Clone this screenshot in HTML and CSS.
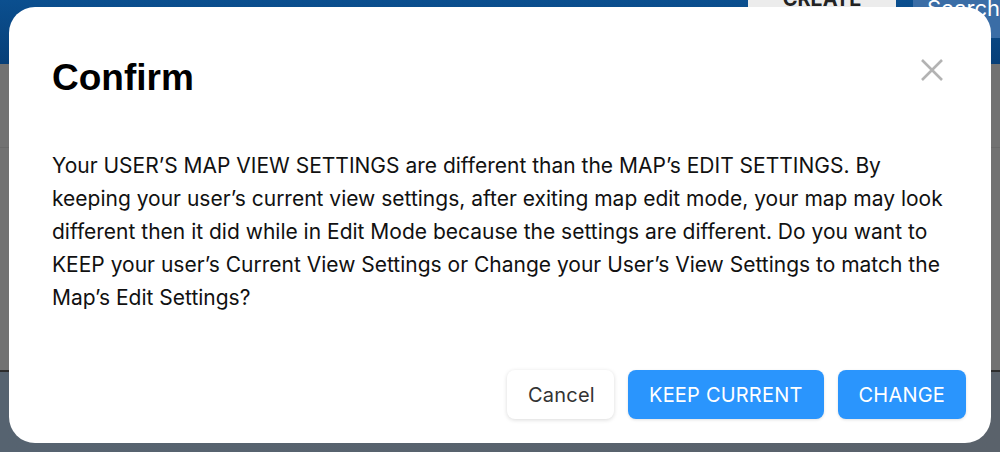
FILE: index.html
```html
<!DOCTYPE html>
<html>
<head>
<meta charset="utf-8">
<link rel="stylesheet" href="styles.css">
</head>
<body>
<div class="app">
  <header class="topbar">
    <div class="create">CREATE</div>
    <div class="search">Search</div>
  </header>
  <div class="content">
    <div class="band"></div>
  </div>
  <div class="footer"></div>
</div>
<div class="overlay">
  <div class="modal">
    <div class="modal-head">
      <h1 class="title">Confirm</h1>
      <button class="close" aria-label="Close">
        <svg width="24" height="24" viewBox="0 0 24 24"><path d="M2 2 L22 22 M22 2 L2 22" stroke="#b3b3b3" stroke-width="2.6" fill="none"/></svg>
      </button>
    </div>
    <p class="message">Your USER’S MAP VIEW SETTINGS are different than the MAP’s EDIT SETTINGS. By keeping your user’s current view settings, after exiting map edit mode, your map may look different then it did while in Edit Mode because the settings are different. Do you want to KEEP your user’s Current View Settings or Change your User’s View Settings to match the Map’s Edit Settings?</p>
    <div class="actions">
      <button class="btn btn-light">Cancel</button>
      <button class="btn btn-primary">KEEP CURRENT</button>
      <button class="btn btn-primary">CHANGE</button>
    </div>
  </div>
</div>
</body>
</html>
```
FILE: styles.css
```css
html, body {
  margin: 0;
  padding: 0;
  width: 1000px;
  height: 452px;
  overflow: hidden;
  font-family: Inter, "Liberation Sans", sans-serif;
}
.app {
  display: flex;
  flex-direction: column;
  height: 452px;
}
.topbar {
  height: 64px;
  background: linear-gradient(#0b4f8f, #073f78);
  display: flex;
  justify-content: flex-end;
  align-items: flex-start;
  gap: 17px;
}
.create {
  width: 148px;
  height: 30px;
  background: #ececec;
  color: #222;
  font-weight: 700;
  font-size: 20px;
  text-align: center;
  line-height: 22px;
  margin-top: -12px;
}
.search {
  width: 87px;
  height: 40px;
  background: #3a6da6;
  color: #fff;
  font-size: 22px;
  line-height: 20px;
  padding-left: 14px;
  margin-top: -2px;
  overflow: hidden;
  white-space: nowrap;
  box-sizing: border-box;
}
.content {
  height: 306px;
  background: #727272;
  border-bottom: 2px solid #2d2d2d;
}
.band {
  height: 83px;
  border-bottom: 1px solid #6a6a6a;
}
.footer {
  flex: 1;
  background: linear-gradient(90deg, #566370, #5a626b);
}
.overlay {
  position: absolute;
  inset: 0;
  padding: 7px 9px 9px 9px;
  box-sizing: border-box;
}
.modal {
  background: #fff;
  border-radius: 26px;
  height: 436px;
  box-sizing: border-box;
  padding: 46px 25px 24px 43px;
  display: flex;
  flex-direction: column;
}
.modal-head {
  display: flex;
  justify-content: space-between;
  align-items: flex-start;
}
.title {
  margin: 0;
  font-family: "Liberation Sans", Arial, sans-serif;
  font-weight: 700;
  font-size: 37px;
  line-height: 50px;
  color: #000;
}
.close {
  background: none;
  border: 0;
  padding: 0;
  margin: 5px 22px 0 0;
  width: 24px;
  height: 24px;
}
.message {
  margin: 46px 0 0 0;
  font-size: 21px;
  line-height: 33px;
  color: #111;
  padding-right: 12px;
}
.actions {
  margin-top: auto;
  display: flex;
  justify-content: flex-end;
  gap: 14px;
}
.btn {
  font-family: Inter, "Liberation Sans", sans-serif;
  font-size: 20px;
  letter-spacing: 0.2px;
  height: 49px;
  border: 0;
  border-radius: 8px;
  padding: 0 21px;
}
.btn-light {
  background: #fff;
  color: #333;
  box-shadow: 0 1px 4px rgba(0,0,0,0.15);
  width: 107px;
}
.btn-primary {
  background: #2a95fd;
  color: #fff;
  box-shadow: 0 1px 3px rgba(0,0,0,0.12);
}
```
